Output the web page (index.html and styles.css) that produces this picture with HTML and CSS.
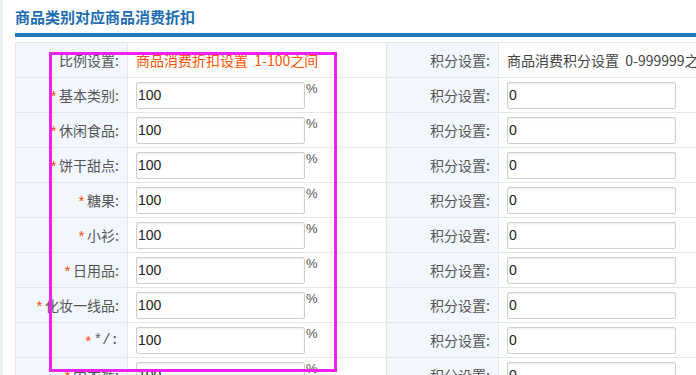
FILE: index.html
```html
<!DOCTYPE html>
<html lang="zh-CN">
<head>
<meta charset="utf-8">
<title>商品类别对应商品消费折扣</title>
<link rel="stylesheet" href="styles.css">
</head>
<body>
<div class="page">
  <h2 class="title">商品类别对应商品消费折扣</h2>
  <div class="bar"></div>
  <div class="grid">
    <div class="lab">比例设置:</div>
    <div class="val hint-orange">商品消费折扣设置&nbsp; 1-100之间</div>
    <div class="lab">积分设置:</div>
    <div class="val hint">商品消费积分设置&nbsp; 0-999999之间</div>

    <div class="lab"><span class="req">*</span>基本类别:</div>
    <div class="val"><input class="inp" value="100"><span class="pct">%</span></div>
    <div class="lab">积分设置:</div>
    <div class="val"><input class="inp" value="0"></div>

    <div class="lab"><span class="req">*</span>休闲食品:</div>
    <div class="val"><input class="inp" value="100"><span class="pct">%</span></div>
    <div class="lab">积分设置:</div>
    <div class="val"><input class="inp" value="0"></div>

    <div class="lab"><span class="req">*</span>饼干甜点:</div>
    <div class="val"><input class="inp" value="100"><span class="pct">%</span></div>
    <div class="lab">积分设置:</div>
    <div class="val"><input class="inp" value="0"></div>

    <div class="lab"><span class="req">*</span>糖果:</div>
    <div class="val"><input class="inp" value="100"><span class="pct">%</span></div>
    <div class="lab">积分设置:</div>
    <div class="val"><input class="inp" value="0"></div>

    <div class="lab"><span class="req">*</span>小衫:</div>
    <div class="val"><input class="inp" value="100"><span class="pct">%</span></div>
    <div class="lab">积分设置:</div>
    <div class="val"><input class="inp" value="0"></div>

    <div class="lab"><span class="req">*</span>日用品:</div>
    <div class="val"><input class="inp" value="100"><span class="pct">%</span></div>
    <div class="lab">积分设置:</div>
    <div class="val"><input class="inp" value="0"></div>

    <div class="lab"><span class="req">*</span>化妆一线品:</div>
    <div class="val"><input class="inp" value="100"><span class="pct">%</span></div>
    <div class="lab">积分设置:</div>
    <div class="val"><input class="inp" value="0"></div>

    <div class="lab"><span class="req">*</span><span class="asc">*/:</span></div>
    <div class="val"><input class="inp" value="100"><span class="pct">%</span></div>
    <div class="lab">积分设置:</div>
    <div class="val"><input class="inp" value="0"></div>

    <div class="lab"><span class="req">*</span>内衣裤:</div>
    <div class="val"><input class="inp" value="100"><span class="pct">%</span></div>
    <div class="lab">积分设置:</div>
    <div class="val"><input class="inp" value="0"></div>
  </div>
  <div class="mark"></div>
</div>
</body>
</html>
```

FILE: styles.css
```css
html, body {
  margin: 0;
  padding: 0;
  overflow: hidden;
  background: #fff;
}
body {
  width: 693px;
  height: 375px;
  border-left: 3px solid #e9f1f9;
  font-family: "Noto Sans CJK SC", "Liberation Sans", sans-serif;
  font-size: 14px;
  color: #555;
}
.page {
  position: relative;
  width: 820px;
  padding-left: 12px;
}
.title {
  margin: 0;
  padding-top: 7px;
  height: 26px;
  line-height: 20px;
  font-size: 15px;
  font-weight: bold;
  color: #1d6db3;
}
.bar {
  height: 4px;
  background: #1f78b7;
  margin-bottom: 5px;
}
.grid {
  display: grid;
  grid-template-columns: 111px 258px 111px 1fr;
  grid-auto-rows: 34px;
  gap: 1px;
  padding: 1px;
  background: #e3e6ea;
}
.lab {
  background: #f1f7fd;
  display: flex;
  align-items: center;
  justify-content: flex-end;
  padding-right: 8px;
  white-space: nowrap;
  color: #555;
}
.val {
  background: #fff;
  display: flex;
  align-items: center;
  padding-left: 8px;
  white-space: nowrap;
}
.hint-orange {
  color: #ff5200;
}
.hint {
  color: #444;
}
.req {
  color: #ff4a00;
  font-family: "Liberation Mono", monospace;
  font-size: 15px;
  position: relative;
  top: 3px;
  margin-right: 1px;
}
.asc {
  font-family: "Liberation Mono", monospace;
  letter-spacing: 0;
}
.inp {
  box-sizing: border-box;
  width: 169px;
  height: 27px;
  margin: 0;
  padding: 0 1px;
  border: 1px solid #cfcfcf;
  border-radius: 2px;
  box-shadow: inset 0 1px 2px rgba(0,0,0,0.08);
  font-family: "Liberation Sans", Arial, sans-serif;
  font-size: 14px;
  color: #222;
  background: #fff;
}
.pct {
  align-self: flex-start;
  margin-top: 4px;
  margin-left: 1px;
  font-family: "Liberation Sans", Arial, sans-serif;
  font-size: 13px;
  line-height: 13px;
  color: #555;
}
.mark {
  position: absolute;
  left: 46px;
  top: 52px;
  width: 282px;
  height: 314px;
  border: 3px solid #f020f0;
}
```
